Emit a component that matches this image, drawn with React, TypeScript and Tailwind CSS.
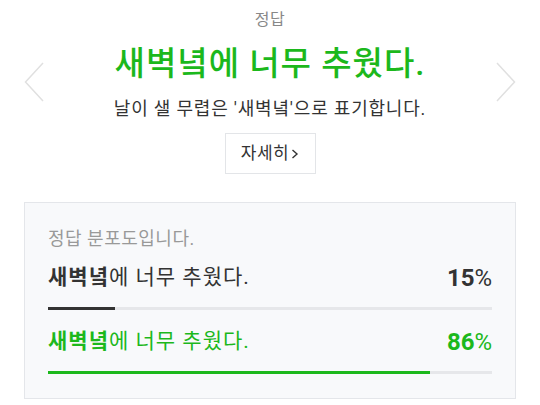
export default function App() {
  const rows = [
    { bold: '새벽녘', rest: '에 너무 추웠다.', pct: 15, correct: false },
    { bold: '새벽녘', rest: '에 너무 추웠다.', pct: 86, correct: true },
  ];

  return (
    <main
      className="w-[540px] h-[405px] bg-white overflow-hidden"
      style={{ fontFamily: "Roboto, 'Noto Sans CJK KR', sans-serif" }}
    >
      <section className="relative flex flex-col items-center pt-[8px]">
        <p className="h-[24px] leading-[24px] text-[16px] text-[#888] tracking-[0.5px]">정답</p>
        <h1 className="mt-[12px] h-[40px] leading-[40px] text-[33px] font-medium text-[#1cb81c] tracking-[1px]">
          새벽녘에 너무 추웠다.
        </h1>
        <p className="mt-[12px] h-[26px] leading-[26px] text-[18px] text-[#333] tracking-[0.8px]">
          날이 샐 무렵은 '새벽녘'으로 표기합니다.
        </p>
        <button className="mt-[11px] w-[91px] h-[41px] border border-[#e3e5e8] bg-white text-[17px] text-[#333] tracking-[0.5px] flex items-center justify-center gap-[2px]">
          자세히
          <svg width="8" height="12" viewBox="0 0 8 12" fill="none">
            <path d="M1.5 2 L6 6 L1.5 10" stroke="#333" strokeWidth="1.4" />
          </svg>
        </button>

        <button className="absolute left-[24px] top-[62px] text-[#e0e0e0]" aria-label="이전">
          <svg width="21" height="40" viewBox="0 0 21 40" fill="none">
            <path d="M19 1 L1.5 20 L19 39" stroke="currentColor" strokeWidth="1.5" />
          </svg>
        </button>
        <button className="absolute right-[24px] top-[62px] text-[#e0e0e0]" aria-label="다음">
          <svg width="21" height="40" viewBox="0 0 21 40" fill="none">
            <path d="M2 1 L19.5 20 L2 39" stroke="currentColor" strokeWidth="1.5" />
          </svg>
        </button>
      </section>

      <section className="mx-[24px] mt-[28px] h-[197px] border border-[#e4e6ea] bg-[#f8f9fb] px-[23px] pt-[25px]">
        <p className="h-[22px] leading-[22px] text-[18px] text-[#999] tracking-[0.5px]">정답 분포도입니다.</p>
        {rows.map((r, i) => (
          <div key={i} className={i === 0 ? 'mt-[14px]' : 'mt-[18px]'}>
            <div
              className={`flex items-center justify-between h-[28px] ${r.correct ? 'text-[#1cb81c]' : 'text-[#333]'}`}
            >
              <span className="text-[21px] tracking-[1px]">
                <b className="font-bold">{r.bold}</b>
                {r.rest}
              </span>
              <span className="text-[24px]">
                <b className="font-bold">{r.pct}</b>%
              </span>
            </div>
            <div className="mt-[15px] h-[3px] bg-[#e6e7ea]">
              <div
                className={`h-full ${r.correct ? 'bg-[#1cb81c]' : 'bg-[#333]'}`}
                style={{ width: `${r.pct}%` }}
              />
            </div>
          </div>
        ))}
      </section>
    </main>
  );
}
